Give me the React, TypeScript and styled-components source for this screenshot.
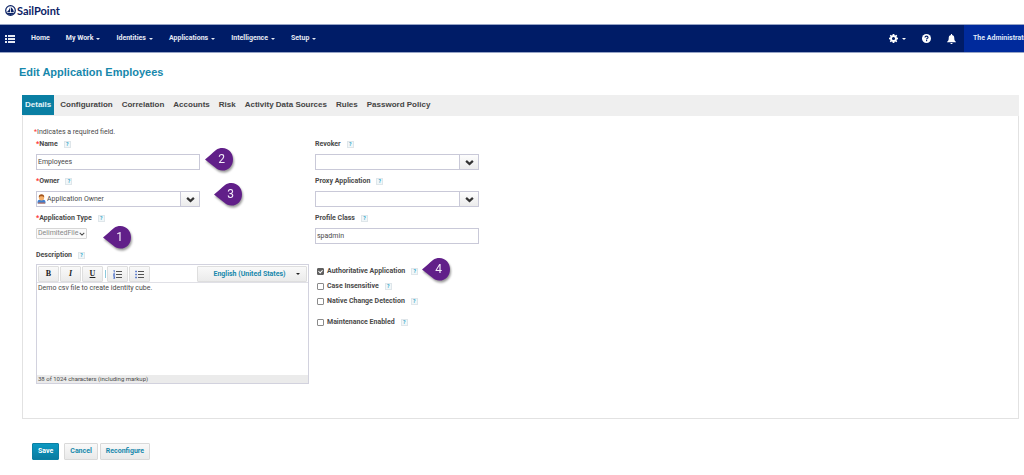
import React from 'react';
import styled, { createGlobalStyle, css } from 'styled-components';

const GlobalStyle = createGlobalStyle`
  *, *::before, *::after { box-sizing: border-box; }
  body {
    margin: 0;
    background: #fff;
    color: #4a4a4a;
    font: 400 7px/11px Roboto, "Liberation Sans", sans-serif;
    overflow-x: hidden;
  }
  button, input, select, textarea { font: inherit; color: inherit; margin: 0; }
  button { cursor: pointer; }
`;

const Brand = styled.header`
  display: flex;
  align-items: center;
  gap: 1px;
  height: 24px;
  padding: 0 5px 3px;
  color: #0b2265;
  font: 700 11px/20px Lato, "Liberation Sans", sans-serif;
`;

const NavBar = styled.nav`
  display: flex;
  align-items: stretch;
  height: 29px;
  background: #001c67;
  border: solid #97a4c6;
  border-width: 1px 0;
  color: #e6eaf4;
  font-weight: 700;
`;

const MenuButton = styled.button`
  display: flex;
  align-items: center;
  padding: 0 0 0 5px;
  border: 0;
  background: none;
`;

const NavList = styled.ul`
  display: flex;
  flex: 1;
  gap: 16px;
  margin: 0;
  padding: 0 0 0 16px;
  list-style: none;
`;

const NavLink = styled.a`
  display: flex;
  align-items: center;
  gap: 3px;
  height: 100%;
  color: inherit;
  text-decoration: none;
`;

const Caret = styled.span`
  border: 2px solid transparent;
  border-top-color: currentColor;
  border-bottom: 0;
`;

const NavTools = styled.div`
  display: flex;
  align-items: center;
  gap: 16px;
  padding-right: 8px;
`;

const ToolButton = styled.button`
  display: flex;
  align-items: center;
  gap: 4px;
  padding: 0;
  border: 0;
  background: none;
  color: #fff;
`;

const UserLink = styled.a`
  display: flex;
  align-items: center;
  width: 60px;
  padding-left: 9px;
  overflow: hidden;
  background: #002a9c;
  color: #dfe5f7;
  white-space: nowrap;
  text-decoration: none;
`;

const Title = styled.h1`
  margin: 0;
  padding: 11px 19px 15px;
  color: #1788ac;
  font: 700 11px/16px "Liberation Sans", sans-serif;
`;

const Main = styled.main`
  padding: 0 5px 16px 0;
`;

const Section = styled.section`
  margin-left: 22px;
`;

const Tabs = styled.div`
  display: flex;
  gap: 3px;
  height: 21px;
  background: #efefef;
`;

const Tab = styled.button<{ $active?: boolean }>`
  height: 20px;
  padding: 0 3px;
  border: 0;
  background: ${(p) => (p.$active ? '#0a7fa3' : 'transparent')};
  color: ${(p) => (p.$active ? '#e3f3f8' : '#444')};
  font: 700 8px/20px "Liberation Sans", sans-serif;
`;

const Panel = styled.form`
  padding: 11px 11px 34px;
  border: solid #e2e2e2;
  border-width: 0 1px 1px;
`;

const Note = styled.p`
  margin: 0;
  padding-bottom: 1px;
`;

const Star = styled.span`
  color: #f33;
`;

const Columns = styled.div`
  display: flex;
  gap: 6px;
  padding-left: 2px;
`;

const Column = styled.div`
  width: 273px;
`;

const FieldBox = styled.div`
  position: relative;
  height: 37px;
`;

const LabelRow = styled.div`
  display: flex;
  align-items: center;
  gap: 6px;
  height: 11px;
  margin-bottom: 4px;
  font-weight: 700;
`;

const Help = styled.button`
  width: 7px;
  height: 7px;
  padding: 0;
  border: 1px solid #dfe6ea;
  background: #f1f7f9;
  color: #1fa3c8;
  font-size: 5px;
  font-weight: 700;
  line-height: 5px;
`;

const control = css`
  height: 16px;
  border: 1px solid #c9c9d8;
  background: #fff;
`;

const TextInput = styled.input`
  ${control}
  display: block;
  width: 164px;
  padding: 0 1px;
`;

const ComboBox = styled.div`
  ${control}
  display: flex;
  align-items: center;
  width: 164px;
`;

const ComboInput = styled.input`
  flex: 1;
  min-width: 0;
  height: 14px;
  padding: 0 1px;
  border: 0;
  background: none;
`;

const ComboButton = styled.button`
  display: flex;
  align-items: center;
  justify-content: center;
  width: 19px;
  height: 14px;
  padding: 0;
  border: 0;
  border-left: 1px solid #c9c9d8;
  background: linear-gradient(#fdfdfd, #ececec);
  color: #333;
`;

const SelectWrap = styled.div`
  position: relative;
  width: max-content;
`;

const SelectArrow = styled.span`
  position: absolute;
  top: 0;
  right: 2px;
  display: flex;
  align-items: center;
  height: 100%;
  pointer-events: none;
`;

const TypeSelect = styled.select`
  appearance: none;
  display: block;
  width: 51px;
  height: 11px;
  padding: 0 1px;
  border: 1px solid #d6d6d6;
  border-radius: 1px;
  background: #fafafa;
  color: #888;
  line-height: 9px;
  opacity: 1;
`;

const Editor = styled.div`
  margin-top: -1px;
  border: 1px solid #d2d2de;
`;

const EditorBar = styled.div`
  display: flex;
  gap: 1px;
  height: 18px;
  padding: 1px 1px 0;
  border-bottom: 1px solid #e0e0e6;
`;

const EditorButton = styled.button`
  display: flex;
  align-items: center;
  justify-content: center;
  width: 21px;
  height: 16px;
  padding: 0;
  border: 1px solid #dedede;
  border-radius: 1px;
  background: linear-gradient(#f9f9f9, #ebebeb);
  color: #222;
  font: 700 8px/12px "Liberation Serif", serif;
`;

const Separator = styled.span`
  width: 1px;
  height: 8px;
  margin: 4px 0 0 1px;
  background: #8cc9dc;
`;

const LanguageWrap = styled(SelectWrap)`
  margin-left: auto;
`;

const LanguageSelect = styled.select`
  appearance: none;
  display: block;
  width: 110px;
  height: 16px;
  padding: 0 5px 0 0;
  border: 1px solid #dedede;
  border-radius: 1px;
  background: linear-gradient(#f9f9f9, #ebebeb);
  color: #1788ac;
  font-weight: 700;
  text-align-last: center;
`;

const LanguageArrow = styled(SelectArrow)`
  right: 7px;
  color: #222;
`;

const TextArea = styled.textarea`
  display: block;
  width: 100%;
  height: 92px;
  padding: 0 1px;
  border: 0;
  outline: 0;
  resize: none;
`;

const Counter = styled.div`
  height: 8px;
  padding-left: 1px;
  background: #ebebeb;
  font-size: 6px;
  line-height: 8px;
`;

const Checks = styled.div`
  display: flex;
  flex-direction: column;
  gap: 4px;
  padding: 16px 0 0 2px;
`;

const CheckRow = styled.div<{ $apart?: boolean }>`
  position: relative;
  display: flex;
  align-items: center;
  gap: 6px;
  height: 11px;
  margin-top: ${(p) => (p.$apart ? '6px' : '0')};
  font-weight: 700;
`;

const CheckLabel = styled.label`
  display: flex;
  align-items: center;
  gap: 3px;
`;

const CheckInput = styled.input`
  appearance: none;
  display: flex;
  justify-content: center;
  width: 7px;
  height: 7px;
  border: 1px solid #8a8a8a;
  border-radius: 1px;
  background: #fff;
  &:checked {
    border-color: #606060;
    background: #606060;
  }
  &:checked::after {
    content: '';
    width: 3px;
    height: 4px;
    border: solid #fff;
    border-width: 0 1px 1px 0;
    transform: rotate(45deg);
  }
`;

const PinBox = styled.span<{ $x: number; $y: number }>`
  position: absolute;
  left: ${(p) => p.$x}px;
  top: ${(p) => p.$y}px;
  z-index: 1;
  display: grid;
  width: 28px;
  height: 23px;
  color: #f4eefa;
  font-size: 12px;
  font-weight: 400;
  line-height: 23px;
  filter: drop-shadow(1px 2px 1px rgba(0, 0, 0, 0.4));
  & > * { grid-area: 1 / 1; }
`;

const PinNumber = styled.span`
  padding-left: 5px;
  text-align: center;
`;

const Actions = styled.div`
  display: flex;
  gap: 2px;
  padding: 24px 0 0 32px;
`;

const ActionButton = styled.button<{ $primary?: boolean }>`
  height: 17px;
  padding: 0 5px;
  border: 1px solid ${(p) => (p.$primary ? '#0a7fa3' : '#d9d9d9')};
  border-radius: 1px;
  margin-right: ${(p) => (p.$primary ? '3px' : '0')};
  background: ${(p) => (p.$primary ? 'linear-gradient(#0b99c2, #0a7ba0)' : 'linear-gradient(#f9f9f9, #e9e9e9)')};
  color: ${(p) => (p.$primary ? '#fff' : '#1788ac')};
  font-weight: 700;
`;

const Chevron = ({ size = 8, weight = 2 }: { size?: number; weight?: number }) => (
  <svg width={size} height={size} viewBox="0 0 8 8" fill="none" stroke="currentColor" strokeWidth={weight} aria-hidden="true">
    <path d="M1 2.6 4 5.4 7 2.6" />
  </svg>
);

const Pin = ({ n, x, y }: { n: number; x: number; y: number }) => (
  <PinBox $x={x} $y={y}>
    <svg width="28" height="23" viewBox="0 0 28 23" aria-hidden="true">
      <path d="M0 11.5C4 8 8 4.500 11 2C13 .5 15 0 17.500 0C23.500 0 28 5 28 11.200C28 18 23.500 22.600 17.500 22.600C14.500 22.600 12.500 21.500 10.500 19.800C7 17 4 14.500 0 11.500Z" fill="#611f89" />
    </svg>
    <PinNumber>{n}</PinNumber>
  </PinBox>
);

type FieldProps = {
  id: string;
  label: string;
  required?: boolean;
  children: React.ReactNode;
};

const FieldLabel = ({ id, label, required }: Omit<FieldProps, 'children'>) => (
  <LabelRow>
    <label htmlFor={id}>
      {required && <Star>*</Star>}
      {label}
    </label>
    <Help type="button" aria-label={`Help for ${label}`}>?</Help>
  </LabelRow>
);

const Field = ({ children, ...rest }: FieldProps) => (
  <FieldBox>
    <FieldLabel {...rest} />
    {children}
  </FieldBox>
);

const Combo = ({ id, value = '', icon }: { id: string; value?: string; icon?: React.ReactNode }) => (
  <ComboBox>
    {icon}
    <ComboInput id={id} defaultValue={value} />
    <ComboButton type="button" aria-label="Show choices"><Chevron size={9} /></ComboButton>
  </ComboBox>
);

const Person = () => (
  <svg width="9" height="10" viewBox="0 0 9 10" aria-hidden="true">
    <path d="M0.500 9.500V8C.5 6.300 2 5.600 4.500 5.600S8.500 6.300 8.500 8V9.500Z" fill="#3f7fd0" />
    <path d="M1 8.600H8V9.500H1Z" fill="#d9663a" />
    <circle cx="4.500" cy="3.800" r="2.600" fill="#f5b06a" />
    <path d="M1.800 3.600C1.500 1.300 2.800.3 4.500.3S7.500 1.300 7.200 3.600C6.500 2.300 5 2.200 3.500 2.300Z" fill="#a4561c" />
  </svg>
);

const ListIcon = ({ numbered }: { numbered?: boolean }) => (
  <svg width="9" height="9" viewBox="0 0 9 9" aria-hidden="true">
    <path d="M3 1.500H9M3 4.500H9M3 7.500H9" stroke="#555" />
    {numbered ? (
      <path d="M.5 .8 1.300.3V2.500M.4 3.600H1.600V4.500H.5V5.500H1.800M.4 6.500H1.600V8.600H.4M.6 7.500H1.600" stroke="#3b62c4" strokeWidth=".8" fill="none" />
    ) : (
      <path d="M.3 .8H1.800V2.200H.3ZM.3 3.800H1.800V5.200H.3ZM.3 6.800H1.800V8.200H.3Z" fill="#3b62c4" />
    )}
  </svg>
);

const checks = [
  { id: 'authoritative', label: 'Authoritative Application', checked: true, pin: true },
  { id: 'insensitive', label: 'Case Insensitive' },
  { id: 'native', label: 'Native Change Detection' },
  { id: 'maintenance', label: 'Maintenance Enabled', apart: true },
];

const menus = ['My Work', 'Identities', 'Applications', 'Intelligence', 'Setup'];
const tabs = ['Details', 'Configuration', 'Correlation', 'Accounts', 'Risk', 'Activity Data Sources', 'Rules', 'Password Policy'];

export default function App() {
  return (
    <>
      <GlobalStyle />
      <Brand>
        <svg width="11" height="11" viewBox="0 0 11 11" aria-hidden="true">
          <circle cx="5.500" cy="5.500" r="4.800" fill="none" stroke="#0b2265" strokeWidth="1.200" />
          <path d="M5.200 1.500V7.300H1.700C3.500 5.800 4.700 4 5.200 1.500ZM6 2.300C7.700 3.600 8.700 5.300 8.900 7.300H6ZM1.800 8H9.200C8.200 9.400 6.800 9.900 5.500 9.900S2.800 9.400 1.800 8Z" fill="#0b2265" />
        </svg>
        SailPoint
      </Brand>
      <NavBar>
        <MenuButton aria-label="Menu">
          <svg width="10" height="8" viewBox="0 0 10 8" fill="#e6eaf4" aria-hidden="true">
            <path d="M0 0H2V2H0ZM3 0H10V2H3ZM0 3H2V5H0ZM3 3H10V5H3ZM0 6H2V8H0ZM3 6H10V8H3Z" />
          </svg>
        </MenuButton>
        <NavList>
          <li><NavLink href="#home">Home</NavLink></li>
          {menus.map((m) => (
            <li key={m}><NavLink href="#menu">{m}<Caret /></NavLink></li>
          ))}
        </NavList>
        <NavTools>
          <ToolButton aria-label="Settings">
            <svg width="9" height="9" viewBox="0 0 16 16" aria-hidden="true">
              <path fill="currentColor" fillRule="evenodd" d="M6.600 0H9.400L9.900 2.200 11.200 2.800 13.100 1.500 14.600 3.100 13.300 5 13.900 6.200 16 6.600V9.400L13.900 9.900 13.300 11.100 14.600 13 13 14.600 11.100 13.300 9.900 13.900 9.400 16H6.600L6.100 13.900 4.900 13.300 3 14.600 1.400 13 2.700 11.100 2.100 9.900 0 9.400V6.600L2.100 6.100 2.700 4.900 1.400 3 3 1.400 4.900 2.700 6.100 2.100ZM8 5.200A2.800 2.800 0 1 0 8 10.800A2.800 2.800 0 1 0 8 5.200Z" />
            </svg>
            <Caret />
          </ToolButton>
          <ToolButton aria-label="Help">
            <svg width="9" height="9" viewBox="0 0 16 16" aria-hidden="true">
              <circle cx="8" cy="8" r="8" fill="#fff" />
              <path d="M5.300 6.200C5.300 4.500 6.400 3.700 8 3.700S10.700 4.600 10.700 6C10.700 7.700 8.200 7.600 8.200 9.600M8.200 10.800V13" stroke="#001c67" strokeWidth="2" fill="none" />
            </svg>
          </ToolButton>
          <ToolButton aria-label="Notifications">
            <svg width="9" height="10" viewBox="0 0 16 18" fill="currentColor" aria-hidden="true">
              <path d="M7 0H9V1.800C12 2.300 13 4.500 13 7.500C13 11 14 12.500 16 14V15H0V14C2 12.500 3 11 3 7.500C3 4.500 4 2.300 7 1.800ZM6 16H10C10 17.300 9.200 18 8 18S6 17.300 6 16Z" />
            </svg>
          </ToolButton>
        </NavTools>
        <UserLink href="#user">The Administrator</UserLink>
      </NavBar>
      <Main>
        <Title>Edit Application Employees</Title>
        <Section>
          <Tabs role="tablist">
            {tabs.map((t, i) => (
              <Tab key={t} role="tab" aria-selected={i === 0} $active={i === 0}>{t}</Tab>
            ))}
          </Tabs>
          <Panel onSubmit={(e) => e.preventDefault()}>
            <Note><Star>*</Star>Indicates a required field.</Note>
            <Columns>
              <Column>
                <Field id="name" label="Name" required>
                  <TextInput id="name" defaultValue="Employees" />
                  <Pin n={2} x={169} y={9} />
                </Field>
                <Field id="owner" label="Owner" required>
                  <Combo id="owner" value="Application Owner" icon={<Person />} />
                  <Pin n={3} x={178} y={7} />
                </Field>
                <Field id="type" label="Application Type" required>
                  <SelectWrap>
                    <TypeSelect id="type" disabled defaultValue="DelimitedFile">
                      <option>DelimitedFile</option>
                    </TypeSelect>
                    <SelectArrow><Chevron size={6} weight={1.500} /></SelectArrow>
                  </SelectWrap>
                  <Pin n={1} x={67} y={13} />
                </Field>
                <FieldLabel id="description" label="Description" />
                <Editor>
                  <EditorBar>
                    <EditorButton type="button" aria-label="Bold"><b>B</b></EditorButton>
                    <EditorButton type="button" aria-label="Italic"><i>I</i></EditorButton>
                    <EditorButton type="button" aria-label="Underline"><u>U</u></EditorButton>
                    <Separator />
                    <EditorButton type="button" aria-label="Numbered list"><ListIcon numbered /></EditorButton>
                    <EditorButton type="button" aria-label="Bulleted list"><ListIcon /></EditorButton>
                    <LanguageWrap>
                      <LanguageSelect aria-label="Language" defaultValue="en">
                        <option value="en">English (United States)</option>
                      </LanguageSelect>
                      <LanguageArrow><Caret /></LanguageArrow>
                    </LanguageWrap>
                  </EditorBar>
                  <TextArea id="description" defaultValue="Demo csv file to create identity cube." />
                  <Counter>38 of 1024 characters (including markup)</Counter>
                </Editor>
              </Column>
              <Column>
                <Field id="revoker" label="Revoker"><Combo id="revoker" /></Field>
                <Field id="proxy" label="Proxy Application"><Combo id="proxy" /></Field>
                <Field id="profile" label="Profile Class"><TextInput id="profile" defaultValue="spadmin" /></Field>
                <Checks>
                  {checks.map((c) => (
                    <CheckRow key={c.id} $apart={c.apart}>
                      <CheckLabel>
                        <CheckInput type="checkbox" defaultChecked={c.checked} />
                        {c.label}
                      </CheckLabel>
                      <Help type="button" aria-label={`Help for ${c.label}`}>?</Help>
                      {c.pin && <Pin n={4} x={105} y={-8} />}
                    </CheckRow>
                  ))}
                </Checks>
              </Column>
            </Columns>
          </Panel>
        </Section>
        <Actions>
          <ActionButton type="button" $primary>Save</ActionButton>
          <ActionButton type="button">Cancel</ActionButton>
          <ActionButton type="button">Reconfigure</ActionButton>
        </Actions>
      </Main>
    </>
  );
}
